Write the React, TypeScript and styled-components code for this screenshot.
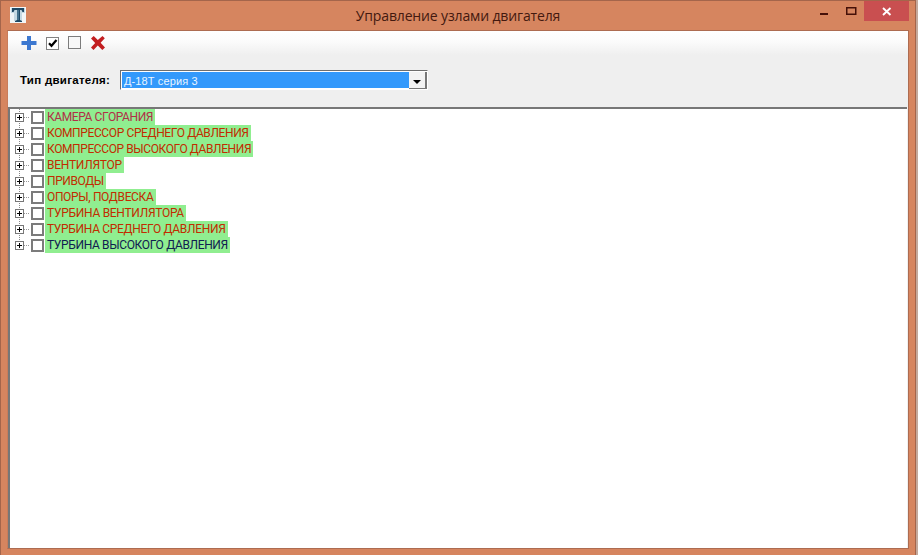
import React from "react";
import styled, { createGlobalStyle } from "styled-components";

const GlobalStyle = createGlobalStyle`
  * { box-sizing: border-box; }
  body { margin: 0; overflow: hidden; background: #c4a99c; }
`;

const Window = styled.div`
  width: 916px;
  height: 555px;
  padding: 0 6px 6px;
  display: flex;
  flex-direction: column;
  background: #d6855f;
  border: solid #a4654b;
  border-width: 1px 1px 0 1px;
  font-family: "Liberation Sans", Arial, sans-serif;
`;

const TitleBar = styled.header`
  height: 29px;
  flex: none;
  display: grid;
  grid-template-columns: 100px 1fr 100px;
`;

const AppIcon = styled.svg`
  width: 16px;
  height: 16px;
  margin: 6px 0 0 3px;
`;

const Title = styled.h1`
  margin: 0;
  padding-top: 5px;
  text-align: center;
  font: 400 14px/20px "Open Sans", "Noto Sans", sans-serif;
  letter-spacing: -0.14px;
  color: #43190f;
  white-space: nowrap;
`;

const Controls = styled.div`
  display: flex;
  justify-content: flex-end;
`;

const ControlButton = styled.button<{ $w: number; $close?: boolean }>`
  width: ${(p) => p.$w}px;
  height: 20px;
  padding: 0;
  border: 0;
  flex: none;
  background: ${(p) => (p.$close ? "#c94f50" : "transparent")};
  svg { display: block; }
`;

const Client = styled.main`
  flex: 1;
  display: flex;
  flex-direction: column;
  border: 1px solid #ad6c51;
  border-left-color: #c87c5b;
  background: #efefef;
`;

const Toolbar = styled.div`
  height: 24px;
  flex: none;
  display: flex;
  background: linear-gradient(#ffffff, #fbfbfb 45%, #efefef);
`;

const ToolButton = styled.button<{ $gap: number }>`
  width: 16px;
  height: 16px;
  padding: 0;
  border: 0;
  margin: 4px 0 0 ${(p) => p.$gap}px;
  background: none;
  svg { display: block; }
`;

const Filter = styled.div`
  height: 52px;
  flex: none;
  display: flex;
  padding: 15px 0 0 12px;
`;

const FilterLabel = styled.label`
  width: 100px;
  font: 700 11.5px/20px "Liberation Sans", Arial, sans-serif;
  letter-spacing: 0.28px;
  color: #000;
  white-space: nowrap;
`;

const Combo = styled.div`
  width: 308px;
  height: 20px;
  display: flex;
  padding: 1px;
  background: #fff;
  border: 1px solid #6e6e6e;
  border-right-color: #fff;
  border-bottom-color: #fff;
`;

const ComboValue = styled.div`
  flex: 1;
  height: 16px;
  padding-left: 2px;
  background: #3399fb;
  color: #e9f5ff;
  font-size: 11px;
  line-height: 18px;
  letter-spacing: 0.12px;
`;

const ComboArrow = styled.button`
  width: 18px;
  height: 17px;
  padding: 0;
  margin: 0 -1px 0 0;
  border: solid #777;
  border-width: 0 2px 1px 0;
  background: #f3f3f3;
  svg { display: block; }
`;

const Tree = styled.ul`
  flex: 1;
  margin: 0 1px 0 0;
  padding: 0 0 0 5px;
  list-style: none;
  background: #fff;
  border: solid #6c6a6a;
  border-width: 2px 0 0 2px;
  border-top-color: #777;
  border-left-color: #777;
`;

const Node = styled.li`
  height: 16px;
  display: flex;
`;

const Branch = styled.svg`
  width: 16px;
  height: 16px;
  flex: none;
`;

const Check = styled.span`
  width: 13px;
  height: 13px;
  flex: none;
  margin: 2px 1px 0 0;
  border: 2px solid #7b7b7b;
  background: #fff;
`;

const NodeLabel = styled.span<{ $w: number; $color: string; $ls: number }>`
  width: ${(p) => p.$w}px;
  height: 16px;
  padding-left: 2px;
  background: #90ee90;
  color: ${(p) => p.$color};
  font: 12px/16px Roboto, "Liberation Sans", Arial, sans-serif;
  letter-spacing: ${(p) => p.$ls}px;
  white-space: nowrap;
`;

const nodes = [
  { text: "КАМЕРА СГОРАНИЯ", w: 110, color: "#b03048", ls: -0.4 },
  { text: "КОМПРЕССОР СРЕДНЕГО ДАВЛЕНИЯ", w: 206, color: "#c22c00", ls: -0.38 },
  { text: "КОМПРЕССОР ВЫСОКОГО ДАВЛЕНИЯ", w: 208, color: "#c22c00", ls: -0.4 },
  { text: "ВЕНТИЛЯТОР", w: 79, color: "#c22c00", ls: -0.25 },
  { text: "ПРИВОДЫ", w: 61, color: "#c22c00", ls: -0.4 },
  { text: "ОПОРЫ, ПОДВЕСКА", w: 111, color: "#c22c00", ls: -0.35 },
  { text: "ТУРБИНА ВЕНТИЛЯТОРА", w: 141, color: "#c22c00", ls: -0.28 },
  { text: "ТУРБИНА СРЕДНЕГО ДАВЛЕНИЯ", w: 183, color: "#c22c00", ls: -0.32 },
  { text: "ТУРБИНА ВЫСОКОГО ДАВЛЕНИЯ", w: 185, color: "#102050", ls: -0.35 },
];

function TreeNode({ node, last }: { node: (typeof nodes)[number]; last: boolean }) {
  return (
    <Node>
      <Branch viewBox="0 0 16 16" shapeRendering="crispEdges">
        <path d={last ? "M4.5 0V4" : "M4.5 0V16"} stroke="#888" strokeDasharray="1 1" />
        <path d="M9 8.5H14" stroke="#999" strokeDasharray="1 1" />
        <rect x="0.5" y="4.5" width="8" height="8" fill="#fff" stroke="#777" />
        <path d="M2 8.5H7M4.5 6V11" stroke="#000" />
      </Branch>
      <Check />
      <NodeLabel $w={node.w} $color={node.color} $ls={node.ls}>{node.text}</NodeLabel>
    </Node>
  );
}

export default function App() {
  return (
    <>
      <GlobalStyle />
      <Window>
        <TitleBar>
          <AppIcon viewBox="0 0 16 16">
            <path fill="#f2f6f8" d="M0 0H16V16H0z" />
            <path fill="#8fb6ca" d="M1 1H15V6H12V14H4V6H1z" opacity=".45" />
            <path fill="#1f4965" d="M2 1H14V5H12.5L11.5 3H10V13L12 14V15H5V14L7 13V3H4.5L3.5 5H2z" />
            <path stroke="#6c9cb5" d="M8 3V13" />
          </AppIcon>
          <Title>Управление узлами двигателя</Title>
          <Controls>
            <ControlButton $w={27} aria-label="Свернуть">
              <svg width="27" height="20"><path d="M3 12H11V14H3z" fill="#451008" /></svg>
            </ControlButton>
            <ControlButton $w={20} aria-label="Развернуть">
              <svg width="20" height="20"><path d="M2.75 6.75H11.75V13.25H2.75z" fill="none" stroke="#451008" strokeWidth="1.5" /></svg>
            </ControlButton>
            <ControlButton $w={45} $close aria-label="Закрыть">
              <svg width="45" height="20"><path d="M19 7L26.5 14M26.5 7L19 14" stroke="#fff" strokeWidth="1.9" /></svg>
            </ControlButton>
          </Controls>
        </TitleBar>
        <Client>
          <Toolbar>
            <ToolButton $gap={13} aria-label="Добавить">
              <svg width="16" height="16"><path d="M6 1H10V6H15.5V10H10V15H6V10H0.5V6H6z" fill="#3c78d0" /></svg>
            </ToolButton>
            <ToolButton $gap={8} aria-label="Отметить все">
              <svg width="16" height="16">
                <rect x="1.5" y="2.5" width="12" height="12" fill="#fff" stroke="#818181" />
                <path d="M4 8.2L6.5 10.8L11.5 5" fill="none" stroke="#000" strokeWidth="2.2" />
              </svg>
            </ToolButton>
            <ToolButton $gap={6} aria-label="Снять отметки">
              <svg width="16" height="16"><rect x="1.5" y="1.5" width="12" height="12" fill="#f7f7f7" stroke="#7c7c7c" /></svg>
            </ToolButton>
            <ToolButton $gap={7} aria-label="Удалить">
              <svg width="16" height="16"><path d="M1 3.5L3.7 1L7.8 5L12.5 1L14.8 3.2L10.6 7.8L15 12.5L12.3 15L7.8 10.6L3.5 15L1 12.6L5.2 8z" fill="#c21e20" /></svg>
            </ToolButton>
          </Toolbar>
          <Filter>
            <FilterLabel>Тип двигателя:</FilterLabel>
            <Combo>
              <ComboValue>Д-18Т серия 3</ComboValue>
              <ComboArrow aria-label="Открыть список">
                <svg width="16" height="15"><path d="M4 7H12L8 11z" fill="#000" /></svg>
              </ComboArrow>
            </Combo>
          </Filter>
          <Tree>
            {nodes.map((n, i) => <TreeNode key={n.text} node={n} last={i === nodes.length - 1} />)}
          </Tree>
        </Client>
      </Window>
    </>
  );
}
